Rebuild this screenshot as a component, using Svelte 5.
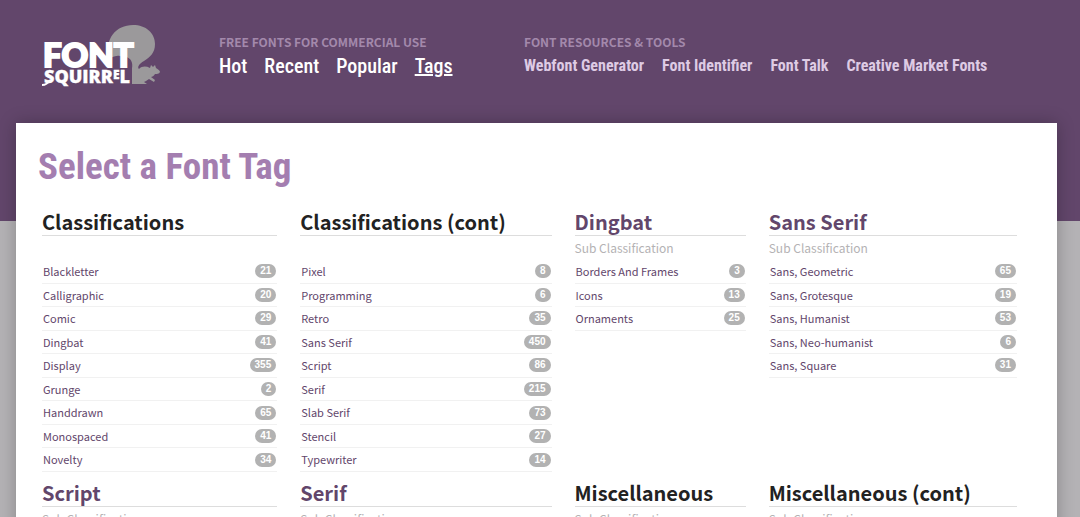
<script>
  const commercial = ['Hot', 'Recent', 'Popular', 'Tags'];
  const tools = ['Webfont Generator', 'Font Identifier', 'Font Talk', 'Creative Market Fonts'];

  const groups = [
    {
      title: 'Classifications',
      tags: [['Blackletter', 21], ['Calligraphic', 20], ['Comic', 29], ['Dingbat', 41], ['Display', 355], ['Grunge', 2], ['Handdrawn', 65], ['Monospaced', 41], ['Novelty', 34]]
    },
    {
      title: 'Classifications (cont)',
      tags: [['Pixel', 8], ['Programming', 6], ['Retro', 35], ['Sans Serif', 450], ['Script', 86], ['Serif', 215], ['Slab Serif', 73], ['Stencil', 27], ['Typewriter', 14]]
    },
    {
      title: 'Dingbat', link: true, sub: true,
      tags: [['Borders And Frames', 3], ['Icons', 13], ['Ornaments', 25]]
    },
    {
      title: 'Sans Serif', link: true, sub: true,
      tags: [['Sans, Geometric', 65], ['Sans, Grotesque', 19], ['Sans, Humanist', 53], ['Sans, Neo-humanist', 6], ['Sans, Square', 31]]
    },
    { title: 'Script', link: true, sub: true, tags: [] },
    { title: 'Serif', link: true, sub: true, tags: [] },
    { title: 'Miscellaneous', sub: true, tags: [] },
    { title: 'Miscellaneous (cont)', sub: true, tags: [] }
  ];
</script>

<div class="page">
  <header>
    <a class="logo" href="#home" aria-label="Font Squirrel">
      <svg viewBox="0 0 120 66" width="120" height="66">
        <path
          fill="#9b999b"
          d="M67 35C62 15 74 1 91 1C104 1 113 9 113 20C113 29 108 33 102 37C97 40 95 43 97 45C100 42 104 42 108 44L109 41L111 43L113 41L114 44C116 45 118 47 118 48C117 50 115 50 113 50C112 52 110 53 109 53L113 56L112 58L107 55L104 57L102 58L105 60H90V44C91 39 89 34 84 33L78 32C73 31 69 34 67 35Z"
        />
        <g fill="#fff" stroke="#fff" font-weight="900">
          <text x="1" y="43" font-family="Lato, sans-serif" font-size="33" stroke-width="2">FONT</text>
          <text x="2" y="59" font-family="'Open Sans', sans-serif" font-size="18" stroke-width=".3">SQUIRR<tspan font-size="12" dy="-4">E</tspan><tspan dy="4">L</tspan></text>
        </g>
        <path fill="none" stroke="#fff" stroke-width="2" d="M8 56Q5 61 0 61" />
      </svg>
    </a>
    <nav class="free">
      <h2>FREE FONTS FOR COMMERCIAL USE</h2>
      <ul>
        {#each commercial as item}
          <li><a href="#{item}" class:current={item === 'Tags'}>{item}</a></li>
        {/each}
      </ul>
    </nav>
    <nav class="tools">
      <h2>FONT RESOURCES &amp; TOOLS</h2>
      <ul>
        {#each tools as item}
          <li><a href="#{item}">{item}</a></li>
        {/each}
      </ul>
    </nav>
  </header>

  <main>
    <h1>Select a Font Tag</h1>
    <div class="groups">
      {#each groups as group}
        <section>
          <h3>
            {#if group.link}<a href="#{group.title}">{group.title}</a>{:else}{group.title}{/if}
          </h3>
          <p>{#if group.sub}Sub Classification{/if}</p>
          <ul>
            {#each group.tags as [name, count]}
              <li><a href="#{name}">{name}</a><span>{count}</span></li>
            {/each}
          </ul>
        </section>
      {/each}
    </div>
  </main>
</div>

<style>
  :global(body) {
    margin: 0;
    background: #b4b2b5;
  }
  :global(html) {
    scrollbar-width: none;
  }
  .page {
    font-family: 'Noto Sans CJK SC', 'Noto Sans', sans-serif;
    background: linear-gradient(#62466b 221px, #b4b2b5 221px);
    padding-bottom: 24px;
  }
  h1, h2, h3, p, ul {
    margin: 0;
    padding: 0;
  }
  ul {
    list-style: none;
  }
  a {
    color: inherit;
    text-decoration: none;
  }
  header {
    display: flex;
    height: 123px;
    box-sizing: border-box;
    padding: 24px 40px 0 42px;
  }
  .logo {
    flex: none;
    width: 177px;
  }
  svg {
    display: block;
    overflow: visible;
  }
  nav {
    padding-top: 10px;
    white-space: nowrap;
  }
  .free {
    flex: none;
    width: 305px;
  }
  h2 {
    font-size: 12px;
    line-height: 16px;
    font-weight: 700;
    color: #a389ab;
  }
  nav ul {
    display: flex;
    gap: 18px;
    font-family: 'Roboto Condensed', 'Liberation Sans Narrow', 'Liberation Sans', sans-serif;
    line-height: 32px;
  }
  .free ul {
    gap: 17px;
    font-size: 20px;
    font-weight: 500;
    color: #fff;
  }
  .tools ul {
    font-size: 16px;
    font-weight: 700;
    color: #decbe4;
  }
  .current {
    text-decoration: underline;
    text-decoration-thickness: 2px;
  }
  main {
    margin: 0 23px 0 16px;
    padding: 20px 40px 80px 26px;
    background: #fff;
    box-shadow: 0 0 16px rgba(0, 0, 0, 0.25);
  }
  h1 {
    margin-left: -4px;
    font: 700 37px/48px 'Roboto Condensed', 'Liberation Sans Narrow', 'Liberation Sans', sans-serif;
    color: #a47eb0;
  }
  .groups {
    display: grid;
    grid-template-columns: 235fr 251fr 171fr 248fr;
    column-gap: 23px;
    padding-top: 17px;
  }
  section {
    white-space: nowrap;
    min-width: 0;
  }
  h3 {
    font-size: 20px;
    line-height: 27px;
    font-weight: 700;
    color: #222;
    border-bottom: 1px solid #ddd;
  }
  h3 a {
    color: #62466b;
  }
  p {
    height: 24px;
    font-size: 12px;
    line-height: 24px;
    color: #b4b2b4;
  }
  section ul {
    padding-bottom: 7px;
  }
  section li {
    display: flex;
    justify-content: space-between;
    align-items: center;
    padding: 0 1px;
    font-size: 11px;
    line-height: 2.05;
    color: #62466b;
    border-bottom: 1px solid #f1f1f1;
  }
  section li span {
    padding: 0 5px;
    border-radius: 7px;
    background: #b2b2b2;
    color: #fff;
    font: 700 10px/14px 'Liberation Sans', Arial, sans-serif;
  }
</style>
